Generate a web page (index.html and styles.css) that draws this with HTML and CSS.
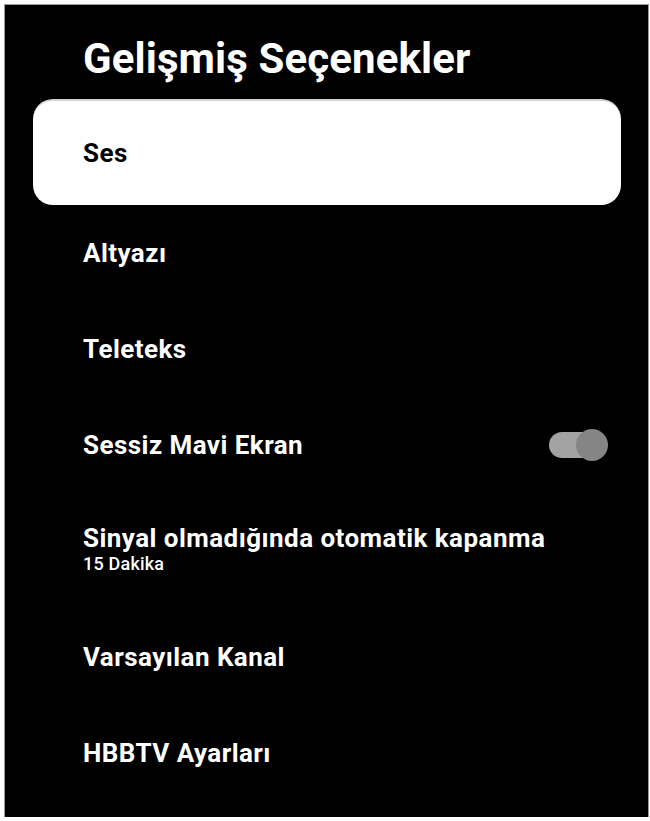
FILE: index.html
```html
<!DOCTYPE html>
<html lang="tr">
<head>
<meta charset="utf-8">
<title>Gelişmiş Seçenekler</title>
<link rel="stylesheet" href="styles.css">
</head>
<body>
<div class="panel">
  <h1 class="title">Gelişmiş Seçenekler</h1>
  <ul class="menu">
    <li class="card">Ses</li>
    <li class="row">Altyazı</li>
    <li class="row">Teleteks</li>
    <li class="row row-toggle">
      <span>Sessiz Mavi Ekran</span>
      <span class="toggle"><span class="knob"></span></span>
    </li>
    <li class="row row-stack">
      <span class="row-label">Sinyal olmadığında otomatik kapanma</span>
      <span class="row-sub">15 Dakika</span>
    </li>
    <li class="row">Varsayılan Kanal</li>
    <li class="row">HBBTV Ayarları</li>
  </ul>
</div>
</body>
</html>
```

FILE: styles.css
```css
html, body {
  margin: 0;
  padding: 0;
  background: #ffffff;
}

body {
  font-family: Roboto, "Noto Sans", "Liberation Sans", sans-serif;
}

.panel {
  box-sizing: border-box;
  width: 643px;
  height: 812px;
  margin: 5px 0 0 5px;
  background: #000000;
  outline: 1px solid #9a9a9a;
  color: #ffffff;
  overflow: hidden;
}

.title {
  margin: 0 0 16px;
  padding: 30px 0 0 78px;
  font-size: 42px;
  line-height: 48px;
  font-weight: 700;
  letter-spacing: 0.1px;
}

.menu {
  list-style: none;
  margin: 0 27px 0 28px;
  padding: 0;
}

.card {
  box-sizing: border-box;
  height: 106px;
  background: #ffffff;
  color: #000000;
  border-radius: 20px;
  border-top: 2px solid #d4d4d4;
  display: flex;
  align-items: center;
  padding-left: 50px;
  font-size: 26px;
  letter-spacing: 0.45px;
  font-weight: 700;
}

.row {
  box-sizing: border-box;
  padding: 34px 13px 34px 50px;
  font-size: 26px;
  line-height: 28px;
  letter-spacing: 0.45px;
  font-weight: 700;
}

.row-toggle {
  display: flex;
  align-items: center;
  justify-content: space-between;
}

.row-stack {
  display: flex;
  flex-direction: column;
  padding-top: 32px;
  padding-bottom: 35px;
}

.row-label {
  line-height: 26px;
}

.row-sub {
  margin-top: 3px;
  font-size: 18px;
  line-height: 20px;
  letter-spacing: 0.2px;
  font-weight: 500;
}

.toggle {
  position: relative;
  display: block;
  width: 51px;
  height: 26px;
  margin-right: 8px;
  border-radius: 13px;
  background: #a3a3a3;
}

.knob {
  position: absolute;
  right: -8px;
  top: -3px;
  width: 32px;
  height: 32px;
  border-radius: 50%;
  background: #858585;
}
```
